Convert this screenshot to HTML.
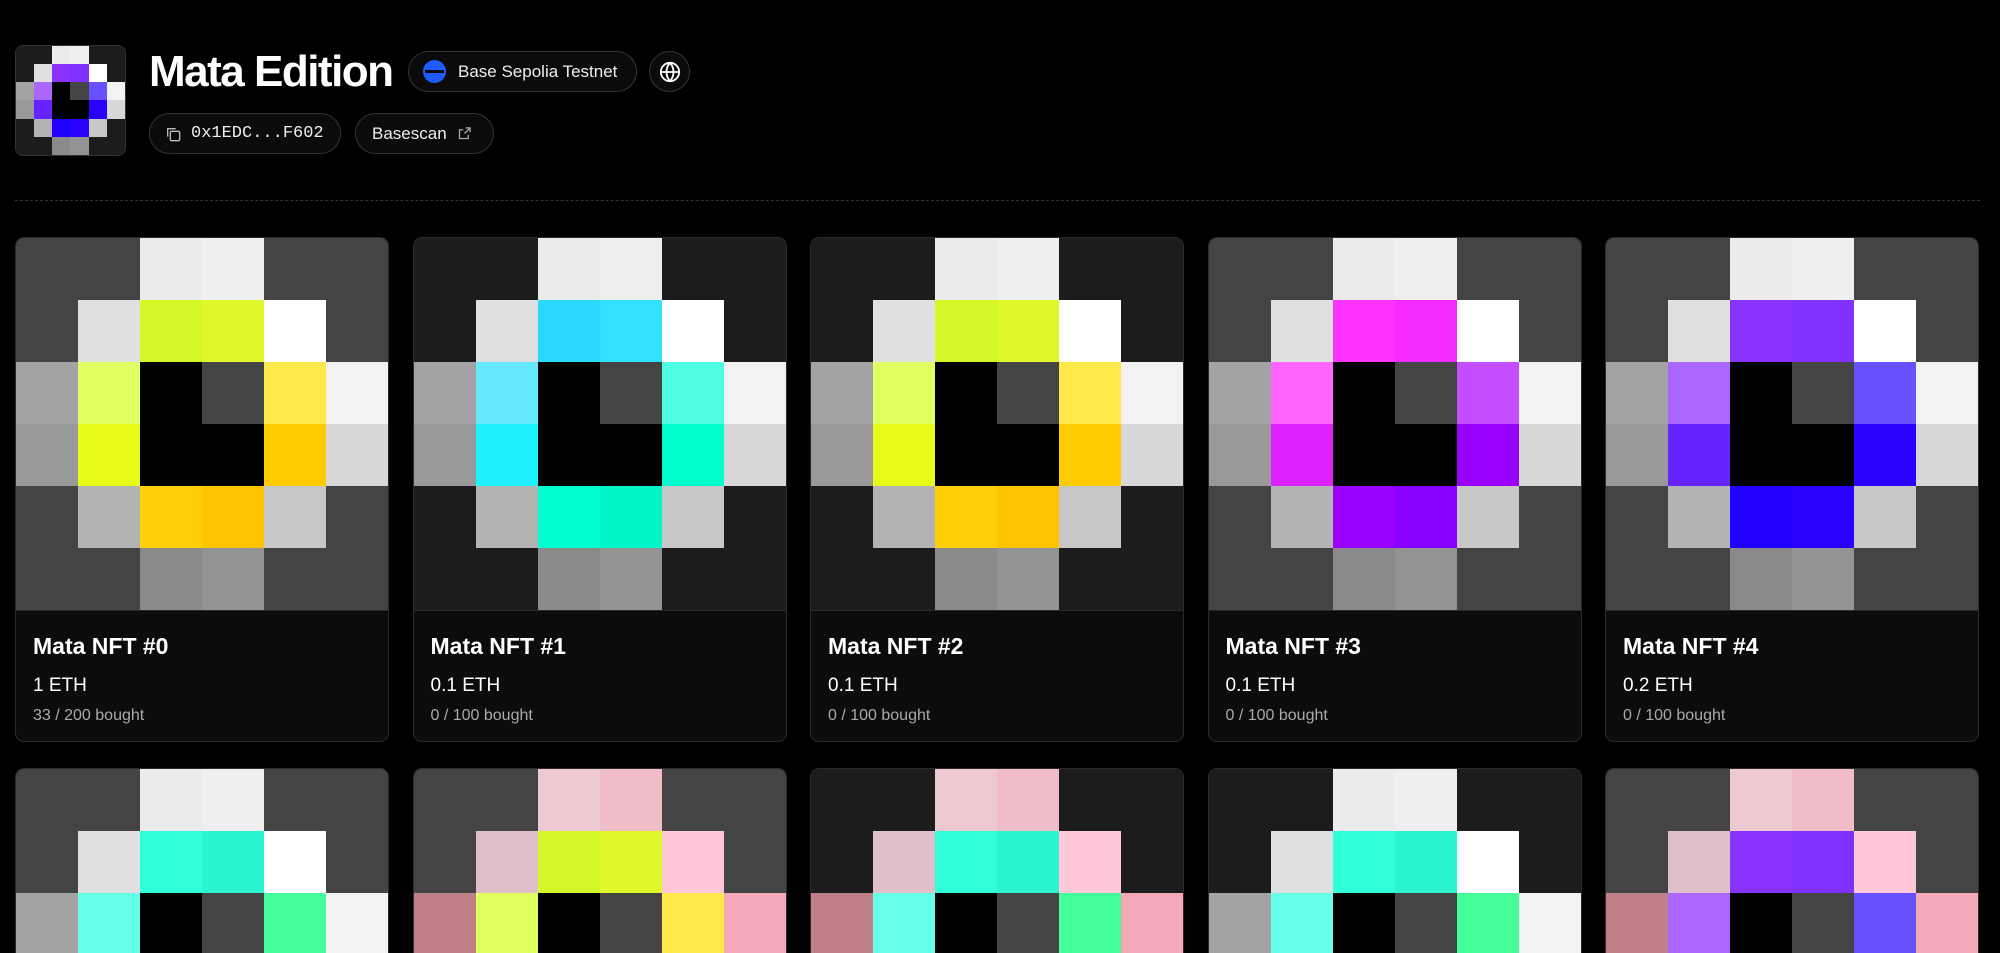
<!DOCTYPE html>
<html style="width:2000px;height:953px;overflow:hidden"><head><meta charset="utf-8">
<style>
*{box-sizing:border-box;margin:0;padding:0}
body{width:2000px;height:953px;background:#000;overflow:hidden;font-family:"Liberation Sans",sans-serif;color:#fff;position:relative}
.grid{display:grid;grid-template-columns:repeat(6,1fr);grid-template-rows:repeat(6,1fr)}
.logo{position:absolute;left:15px;top:45px;width:111px;height:111px;border-radius:8px;overflow:hidden;border:1px solid #333}
h1{position:absolute;left:149px;top:47px;font-size:44px;font-weight:700;letter-spacing:-1.5px;white-space:nowrap}
.pill{position:absolute;height:41px;border:1px solid #333;border-radius:21px;background:#0b0b0b;display:flex;align-items:center;font-size:18px;color:#eee;white-space:nowrap}
.line{position:absolute;left:15px;top:200px;width:1965px;border-top:1px dashed #333}
#cards{position:absolute;left:0;top:0;width:2000px;height:953px;overflow:hidden}
.card{position:absolute;width:374px;height:505px;border:1px solid #2a2a2a;border-radius:9px;overflow:hidden;background:#0c0c0c}
.card .grid{width:372px;height:373px;border-bottom:1px solid #2a2a2a}
.t{position:absolute;left:17px;top:395px;font-size:23px;font-weight:600}
.p{position:absolute;left:17px;top:437px;font-size:19px}
.b{position:absolute;left:17px;top:469px;font-size:16px;color:#aaa}
</style></head><body>
<div class="logo grid" id="logo"></div>
<h1>Mata Edition</h1>
<div class="pill" style="left:408px;top:51px;width:229px;padding-left:14px;font-size:17px"><span style="width:23px;height:23px;border-radius:50%;background:#1f5bff;display:inline-block;position:relative;margin-right:12px"><span style="position:absolute;left:2px;right:2px;top:10px;height:3px;background:#0b0b0b"></span></span>Base Sepolia Testnet</div>
<div class="pill" style="left:649px;top:51px;width:41px;justify-content:center"><svg width="22" height="22" viewBox="0 0 24 24" fill="none" stroke="#fff" stroke-width="2"><circle cx="12" cy="12" r="10"/><path d="M2 12h20M12 2a15 15 0 0 1 0 20M12 2a15 15 0 0 0 0 20"/></svg></div>
<div class="pill" style="left:149px;top:113px;width:192px;padding-left:15px;font-family:'Liberation Mono',monospace;font-size:17px"><svg width="16" height="16" viewBox="0 0 24 24" fill="none" stroke="#bbb" stroke-width="2" style="margin-right:10px"><rect x="8" y="8" width="14" height="14" rx="2"/><path d="M4 16V4h12"/></svg>0x1EDC...F602</div>
<div class="pill" style="left:355px;top:113px;width:139px;padding-left:16px;font-size:17px">Basescan<svg width="15" height="15" viewBox="0 0 24 24" fill="none" stroke="#aaa" stroke-width="2" style="margin-left:10px"><path d="M14 3h7v7M21 3l-9 9M18 14v6H4V6h6"/></svg></div>
<div class="line"></div>
<div id="cards"></div>
<script>
function base(bg){return [[bg,bg,'#ebebeb','#efefef',bg,bg],[bg,'#e0e0e0','A','A2','#fff',bg],['#a3a3a3','B','#000','#444','C','#f2f2f2'],['#999','D','#000','#000','E','#d8d8d8'],[bg,'#b3b3b3','F','F2','#c8c8c8',bg],[bg,bg,'#8a8a8a','#939393',bg,bg]]}
var pal={
y:{A:'#d4f72a',A2:'#e0f72a',B:'#e0ff60',C:'#ffe84a',D:'#e8fc1a',E:'#ffcc00',F:'#ffd00a',F2:'#ffc400'},
c:{A:'#2ad8ff',A2:'#33e0ff',B:'#66e8ff',C:'#4dffe0',D:'#1ef0ff',E:'#00ffcc',F:'#00ffd0',F2:'#00f5c8'},
m:{A:'#ff33ff',A2:'#f52aff',B:'#ff66ff',C:'#c44dff',D:'#dd22ff',E:'#9900ff',F:'#9900ff',F2:'#8800ff'},
v:{A:'#8833ff',A2:'#8030ff',B:'#aa66ff',C:'#6650ff',D:'#6622ff',E:'#2a00ff',F:'#2200ff',F2:'#2a00ff'},
t:{A:'#30ffd8',A2:'#2af5d0',B:'#66ffe8',C:'#44ff99',D:'#1ef0d0',E:'#00ff88',F:'#00ffd0',F2:'#00f5c8'}};
function make(bg,p,pink){var g=base(bg);if(pink){g[0][2]='#ecc8d0';g[0][3]='#f0bcc8';g[1][1]='#e0c0c8';g[1][4]='#ffc8d8';g[2][0]='#c08088';g[2][5]='#f5a8b8';g[3][0]='#c08088';g[3][5]='#f5a8b8';}
var h='';g.forEach(function(r){r.forEach(function(c){h+='<div style="background:'+(pal[p][c]||c)+'"></div>'})});return h}
document.getElementById('logo').innerHTML=make('#1c1c1c','v');
var D='#444',K='#1c1c1c';
var cards=[[D,'y',0,'Mata NFT #0','1 ETH','33 / 200 bought'],[K,'c',0,'Mata NFT #1','0.1 ETH','0 / 100 bought'],[K,'y',0,'Mata NFT #2','0.1 ETH','0 / 100 bought'],[D,'m',0,'Mata NFT #3','0.1 ETH','0 / 100 bought'],[D,'v',0,'Mata NFT #4','0.2 ETH','0 / 100 bought'],
[D,'t',0,'Mata NFT #5','0.1 ETH','0 / 100 bought'],[D,'y',1,'Mata NFT #6','0.1 ETH','0 / 100 bought'],[K,'t',1,'Mata NFT #7','0.1 ETH','0 / 100 bought'],[K,'t',0,'Mata NFT #8','0.1 ETH','0 / 100 bought'],[D,'v',1,'Mata NFT #9','0.1 ETH','0 / 100 bought']];
var h='';cards.forEach(function(c,i){var x=15+(i%5)*397.5,y=237+Math.floor(i/5)*531;
h+='<div class="card" style="left:'+x+'px;top:'+y+'px"><div class="grid">'+make(c[0],c[1],c[2])+'</div><div class="t">'+c[3]+'</div><div class="p">'+c[4]+'</div><div class="b">'+c[5]+'</div></div>'});
document.getElementById('cards').innerHTML=h;
</script>
</body></html>
